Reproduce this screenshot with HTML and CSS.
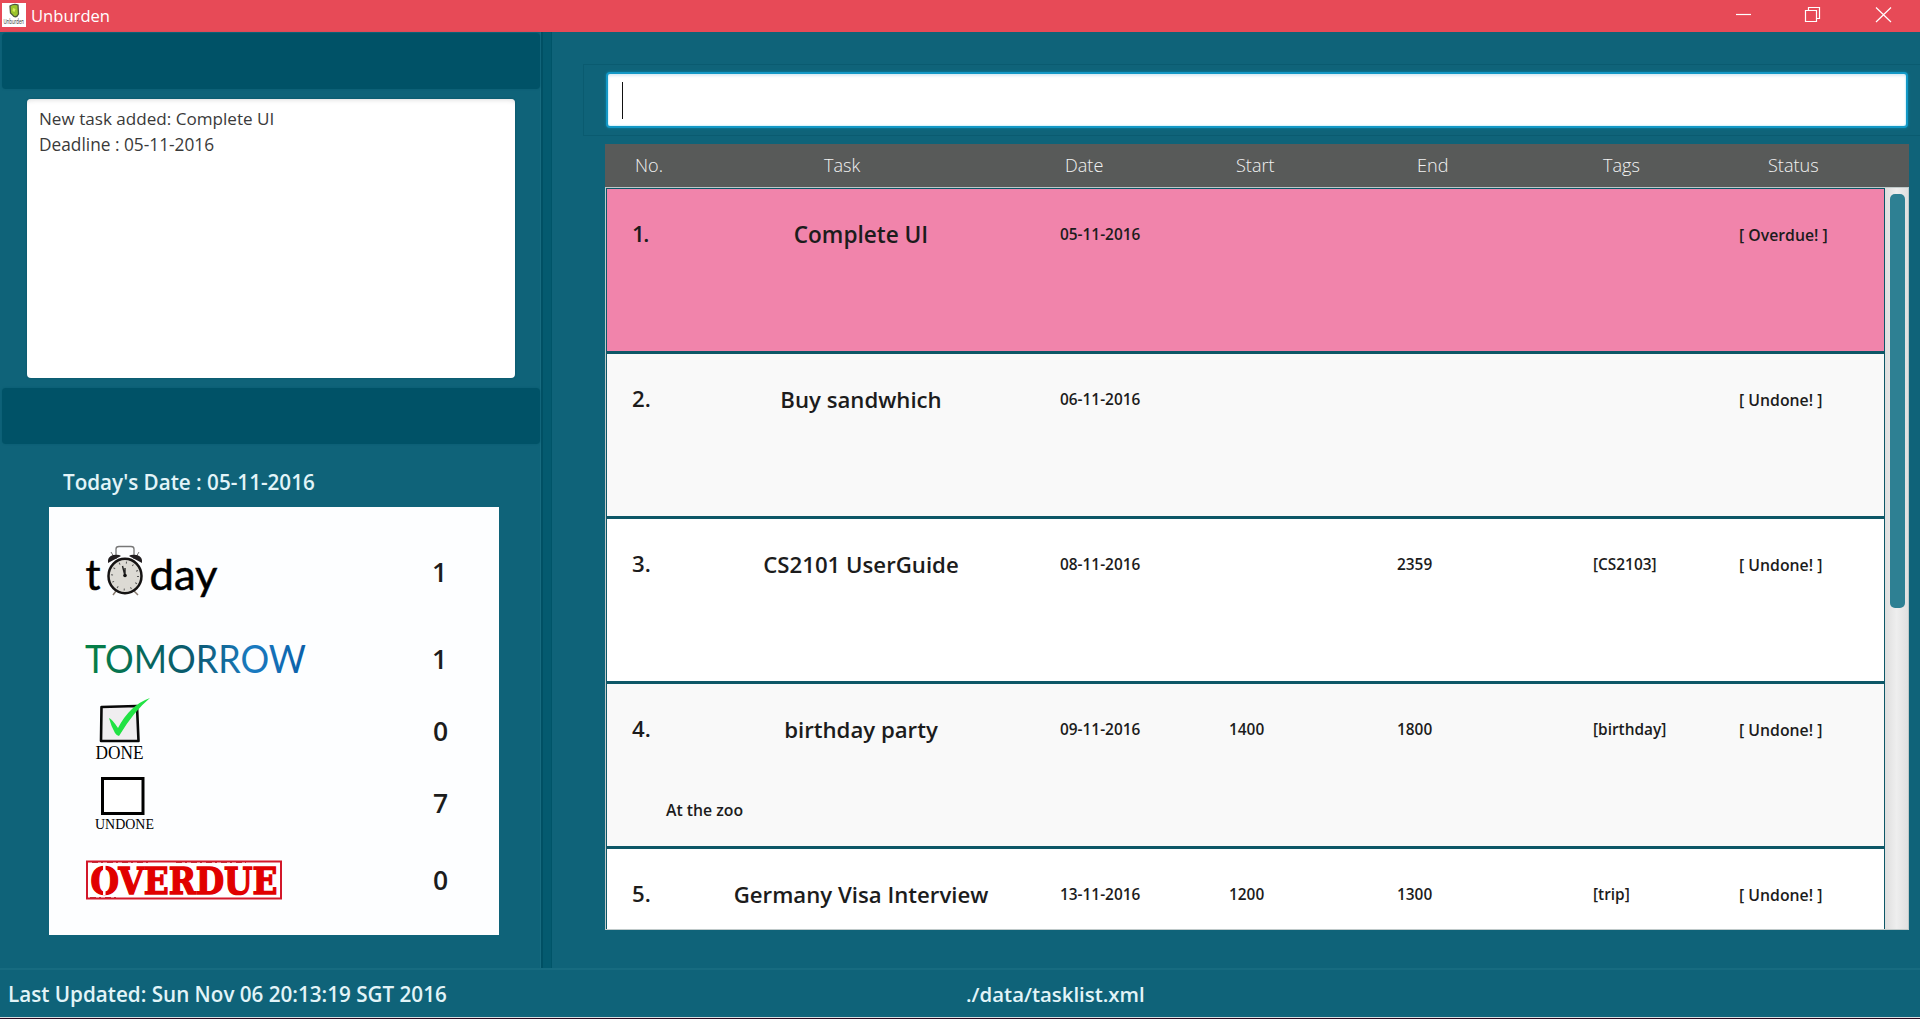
FILE: index.html
```html
<!DOCTYPE html>
<html lang="en">
<head>
<meta charset="utf-8">
<title>Unburden</title>
<link rel="stylesheet" href="styles.css">
</head>
<body>
<header class="titlebar">
  <svg class="app-icon" width="24" height="24" viewBox="0 0 24 24">
    <rect width="24" height="24" fill="#fff"/>
    <path d="M8 3 Q12 .5 16 2 L16.5 11 Q15 14.5 12 13.5 L8.5 10 Z" fill="#9cc52c" stroke="#4d5a3c" stroke-width="1.3"/>
    <path d="M11 5 L13.5 6 L12.5 9 L10.5 8 Z" fill="#d8ec5e"/>
    <text x="1.5" y="12.600" transform="scale(1 1.7)" font-size="4.3" fill="#333">Unburden</text>
  </svg>
  <span class="app-name">Unburden</span>
  <svg class="window-controls" width="160" height="32" viewBox="0 0 160 32" fill="none" stroke="#fff" stroke-width="1.2">
    <path d="M0 14.5H15"/>
    <path d="M69.500 10.500H80.500V21.500H69.500ZM72.500 10V7.500H83.500V18.500H81"/>
    <path d="M140 7.500L155 22M155 7.500L140 22"/>
  </svg>
</header>

<main class="workspace">
  <aside class="sidebar">
    <div class="band"></div>
    <div class="result">New task added: Complete UI<br><span class="deadline">Deadline : 05-11-2016</span></div>
    <div class="band"></div>
    <div class="today-date">Today's Date : 05-11-2016</div>
    <section class="summary">
      <div class="stat stat-today">
        <svg width="225" height="78" viewBox="85 533 225 78">
          <g font-family="Lato, sans-serif" font-size="43" fill="#000" stroke="#000" stroke-width=".5">
            <text x="85.500" y="590" textLength="15" lengthAdjust="spacingAndGlyphs">t</text>
            <text x="149.500" y="590" textLength="68" lengthAdjust="spacingAndGlyphs">day</text>
          </g>
          <path d="M116 559V549Q116 546.500 119 546.500H131Q134 546.500 134 549V559" fill="none" stroke="#777" stroke-width="1.300"/>
          <path d="M111 552L114 557M139 552L136 557" stroke="#777"/>
          <path d="M108 563Q107 557 113 555Q119 554 121 556Z M142 563Q143 557 137 555Q131 554 129 556Z" fill="#221e20"/>
          <path d="M116 591L113 595M134 591L138 595" stroke="#8a7d72" stroke-width="1.500"/>
          <ellipse cx="125" cy="576" rx="16.500" ry="17.300" fill="#dcdad4" stroke="#151313" stroke-width="2.500"/>
          <ellipse cx="125" cy="576" rx="13" ry="13.500" fill="none" stroke="#555" stroke-width="2" stroke-dasharray="1 6"/>
          <path d="M125 576V568M125 576L122.500 566" stroke="#222" stroke-width="1.400"/>
          <circle cx="125" cy="575.500" r="1.800" fill="#111"/>
        </svg>
        <span class="count">1</span>
      </div>
      <div class="stat stat-tomorrow">
        <svg width="225" height="96" viewBox="85 611 225 96">
          <defs>
            <linearGradient id="dusk"><stop offset="0" stop-color="#058244"/><stop offset=".3" stop-color="#07655f"/><stop offset=".5" stop-color="#0b5972"/><stop offset=".75" stop-color="#1a7cc2"/><stop offset="1" stop-color="#0a5fa8"/></linearGradient>
          </defs>
          <text x="85" y="672.500" font-family="Lato, sans-serif" font-size="39.500" textLength="221" lengthAdjust="spacingAndGlyphs" fill="url(#dusk)">TOMORROW</text>
        </svg>
        <span class="count">1</span>
      </div>
      <div class="stat stat-done">
        <svg width="225" height="48" viewBox="85 707 225 48">
          <path d="M101.500 707L137 706L138.500 741H101Z" fill="#f0eef0" stroke="#080808" stroke-width="2.600" stroke-linejoin="round"/>
          <path d="M109 718Q112 719 118 728Q130 705 150 698Q134 711 119 736Q117 736 115 733Q111 726 109 718Z" fill="#22e244"/>
          <text x="95.500" y="759" font-family="Liberation Serif, serif" font-size="19.500" textLength="48" lengthAdjust="spacingAndGlyphs">DONE</text>
        </svg>
        <span class="count">0</span>
      </div>
      <div class="stat stat-undone">
        <svg width="225" height="96" viewBox="85 755 225 96">
          <rect x="102.500" y="778.500" width="40.500" height="35" fill="#fff" stroke="#000" stroke-width="3"/>
          <text x="95" y="828.500" font-family="Liberation Serif, serif" font-size="14" textLength="59" lengthAdjust="spacingAndGlyphs">UNDONE</text>
        </svg>
        <span class="count">7</span>
      </div>
      <div class="stat stat-overdue">
        <svg width="225" height="58" viewBox="85 851 225 58">
          <rect x="87" y="861.500" width="194" height="37" fill="#fff" stroke="#d2182a" stroke-width="2"/>
          <path d="M92 862.500H150M176 862.500H246M90 897.500H118" stroke="#c22a34" stroke-dasharray="6 3 2 4"/>
          <text x="90.500" y="893.500" font-family="DejaVu Serif, serif" font-weight="700" font-size="37.500" textLength="187" lengthAdjust="spacingAndGlyphs" fill="#e10000" stroke="#e10000" stroke-width="1.500">OVERDUE</text>
          <path d="M104.300 865V895" stroke="#fff" stroke-width="2.500"/>
        </svg>
        <span class="count">0</span>
      </div>
    </section>
  </aside>

  <div class="divider"></div>

  <section class="content">
    <div class="command"><div class="command-box"><span class="caret"></span></div></div>
    <div class="columns head">
      <span>No.</span><span>Task</span><span>Date</span><span>Start</span><span>End</span><span>Tags</span><span>Status</span>
    </div>
    <div class="list">
      <div class="rows">
        <article class="task overdue"><div class="columns cells"><b class="no first">1.</b><b class="name wide">Complete UI</b><span>05-11-2016</span><span></span><span></span><span></span><span class="status">[ Overdue! ]</span></div></article>
        <article class="task"><div class="columns cells"><b class="no">2.</b><b class="name">Buy sandwhich</b><span>06-11-2016</span><span></span><span></span><span></span><span class="status">[ Undone! ]</span></div></article>
        <article class="task"><div class="columns cells"><b class="no">3.</b><b class="name">CS2101 UserGuide</b><span>08-11-2016</span><span></span><span>2359</span><span>[CS2103]</span><span class="status">[ Undone! ]</span></div></article>
        <article class="task"><div class="columns cells"><b class="no">4.</b><b class="name">birthday party</b><span>09-11-2016</span><span>1400</span><span>1800</span><span>[birthday]</span><span class="status">[ Undone! ]</span></div><p class="note">At the zoo</p></article>
        <article class="task"><div class="columns cells"><b class="no">5.</b><b class="name">Germany Visa Interview</b><span>13-11-2016</span><span>1200</span><span>1300</span><span>[trip]</span><span class="status">[ Undone! ]</span></div></article>
      </div>
      <div class="scrollbar"><div class="thumb"></div></div>
    </div>
  </section>
</main>

<footer class="statusbar">
  <span class="updated">Last Updated: Sun Nov 06 20:13:19 SGT 2016</span>
  <span class="path">./data/tasklist.xml</span>
</footer>
</body>
</html>
```
FILE: styles.css
```css
* { box-sizing: border-box; }

body {
  margin: 0;
  height: 1019px;
  display: flex;
  flex-direction: column;
  overflow: hidden;
  background: #0f6379;
  font-family: "Open Sans", "Noto Sans", sans-serif;
  color: #1c1c1c;
}

.titlebar {
  flex: none;
  height: 32px;
  display: flex;
  align-items: center;
  padding-left: 2px;
  background: #e74a57;
  color: #fff;
  font-size: 16.6px;
}
.app-icon { margin-top: -2px; }
.app-name { margin-left: 5px; line-height: 32px; }
.window-controls { margin-left: auto; margin-right: 24px; }

.workspace { flex: 1; min-height: 0; display: flex; }

.sidebar {
  width: 541px;
  padding: 1px 0 0 2px;
  display: flex;
  flex-direction: column;
  border-right: 1px solid #176b80;
}
.band {
  flex: none;
  width: 538px;
  height: 56px;
  border-radius: 4px;
  background: #005267;
  box-shadow: 0 0 2px #075a6e;
}
.result {
  flex: none;
  width: 488px;
  height: 279px;
  margin: 10px 0 10px 25px;
  padding: 7px 12px;
  border-radius: 4px;
  background: #fff;
  box-shadow: inset 0 5px 5px -4px #ddd, 0 0 2px #0a4f60;
  color: #3a3a3a;
  font-size: 17.1px;
  line-height: 25.5px;
}
.deadline { font-size: 17.3px; }
.today-date {
  flex: none;
  height: 63px;
  padding: 22px 0 0 61px;
  font-size: 20.65px;
  line-height: 32px;
  font-weight: 600;
  color: #e2f4f8;
}
.summary {
  flex: none;
  width: 450px;
  height: 428px;
  margin-left: 47px;
  padding: 26px 0 0 36px;
  background: #fdfeff;
}
.stat { display: flex; align-items: center; }
.stat svg { overflow: visible; }
.stat-today { height: 78px; }
.stat-tomorrow { height: 96px; }
.stat-done { height: 48px; }
.stat-undone { height: 96px; }
.stat-overdue { height: 58px; }
.count { margin-left: 123px; font-size: 26.5px; font-weight: 600; line-height: 30px; }
.stat-today .count, .stat-tomorrow .count { margin-left: 122px; }

.divider {
  width: 11px;
  height: 936px;
  background: #045a6f;
  border-left: 2px solid #005064;
  border-right: 1px solid #005468;
}

.content {
  flex: 1;
  min-width: 0;
  padding: 32px 0 0 31px;
  display: flex;
  flex-direction: column;
}
.command {
  height: 72px;
  border: 1px solid #0a5b70;
  border-right: 0;
  padding: 7px 12px 0 22px;
}
.command-box {
  height: 56px;
  padding: 8px 14px;
  border: 2px solid #1398c6;
  border-radius: 4px;
  background: #fff;
  box-shadow: inset 0 3px 3px -1px #dcebf3, inset 0 0 2px #7fd8f2, 0 0 3px #0b87a9;
}
.caret { display: block; width: 1px; height: 37px; background: #111; }

.columns { display: grid; }
.head {
  flex: none;
  width: 1304px;
  height: 43px;
  margin: 8px 0 0 22px;
  padding-left: 30px;
  grid-template-columns: 189px 241px 171px 181px 186px 165px 1fr;
  background: #585a59;
  color: #f2f2f2;
  font-size: 18.1px;
  font-weight: 300;
  line-height: 43px;
}

.list {
  flex: none;
  width: 1304px;
  height: 743px;
  margin-left: 22px;
  display: flex;
  border: 1px solid #bfc9c9;
  background: #fff;
}
.rows { flex: 1; overflow: hidden; }
.task {
  height: 165px;
  border: 1px solid #0d5767;
  border-bottom-width: 2px;
  padding: 30px 0 0 25px;
  background: #fff;
}
.task:nth-child(even) { background: #f9f9f9; }
.task.overdue { background: #f184ab; }
.cells {
  grid-template-columns: 40px 388px 169px 168px 196px 146px 1fr;
  align-items: start;
  font-size: 15.4px;
  font-weight: 600;
  line-height: 32px;
}
.no, .name { font-size: 22.2px; font-weight: 600; line-height: 32px; }
.no { line-height: 30px; }
.no.first { letter-spacing: -1.5px; }
.name { text-align: center; padding-right: 10px; }
.name.wide { font-size: 22.6px; }
.status { font-size: 15.8px; }
.note { margin: 49px 0 0 34px; font-size: 15.8px; font-weight: 600; line-height: 30px; }

.scrollbar {
  width: 23px;
  padding: 6px 3px 0 5px;
  background: linear-gradient(90deg, #dedede, #eee 50%, #e0e0e0);
}
.thumb { height: 414px; border-radius: 5px; background: #2e8093; }

.statusbar {
  flex: none;
  height: 51px;
  display: flex;
  padding-left: 8px;
  border-top: 2px solid #176b80;
  border-bottom: 1px solid #2b0a20;
  box-shadow: inset 0 -1px #d8dde0;
  color: #e2f4f8;
  font-size: 20.65px;
  font-weight: 600;
  line-height: 48px;
}
.updated { width: 958px; }
.path { font-size: 20.4px; }
```
